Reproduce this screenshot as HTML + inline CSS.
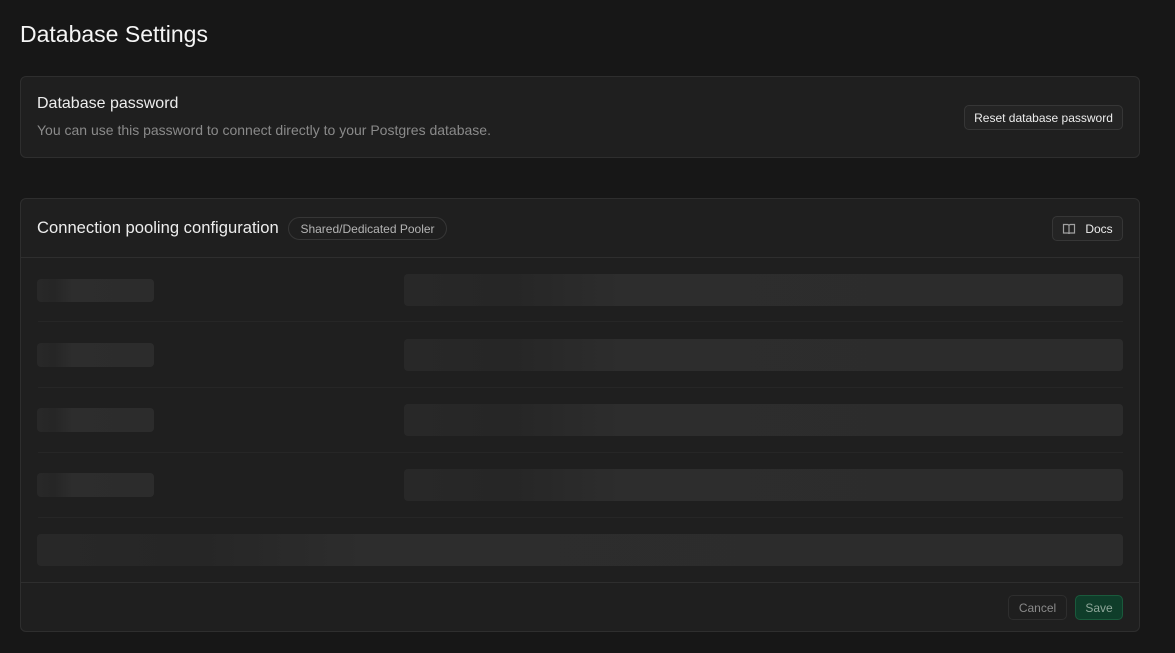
<!DOCTYPE html>
<html><head><style>
*{box-sizing:border-box;margin:0;padding:0}
body{width:1175px;height:653px;background:#171717;font-family:"Liberation Sans",sans-serif;color:#ededed;position:relative;overflow:hidden}
.a{position:absolute}
.card{position:absolute;left:20px;width:1120px;background:#1f1f1f;border:1px solid #2e2e2e;border-radius:6px}
.btn{position:absolute;border:1px solid #363636;background:#242424;border-radius:5px;font-size:12px;color:#ededed;display:flex;align-items:center;justify-content:center}
.sk{position:absolute;border-radius:4px;background:linear-gradient(90deg,#282828 0%,#262626 15%,#2d2d2d 30%,#2c2c2c 100%)}
.sep{position:absolute;left:17px;width:1085px;height:1px;background:#262626}
</style></head><body>
<div class="a" style="left:20px;top:21px;font-size:23px;color:#f5f5f5">Database Settings</div>
<div class="card" style="top:76px;height:82px">
  <div class="a" style="left:16px;top:18px;font-size:16px">Database password</div>
  <div class="a" style="left:16px;top:45px;font-size:14px;color:#8a8a8a">You can use this password to connect directly to your Postgres database.</div>
  <div class="btn" style="left:943px;top:28px;width:159px;height:25px">Reset database password</div>
</div>
<div class="card" style="top:198px;height:434px">
  <div class="a" style="left:16px;top:19px;font-size:16.6px">Connection pooling configuration</div>
  <div class="a" style="left:267px;top:18px;height:23px;width:159px;border:1px solid #363636;border-radius:12px;font-size:12px;color:#b4b4b4;display:flex;align-items:center;justify-content:center">Shared/Dedicated Pooler</div>
  <div class="btn" style="left:1031px;top:17px;width:71px;height:25px"><svg width="14" height="14" viewBox="0 0 14 14" style="margin-right:9px" fill="none" stroke="#a0a0a0" stroke-width="1.2"><path d="M1.5 2.5h4a1.5 1.5 0 0 1 1.5 1.5v8a1 1 0 0 0-1-1h-4.5zM12.5 2.5h-4A1.5 1.5 0 0 0 7 4v8a1 1 0 0 1 1-1h4.5z"/></svg>Docs</div>
  <div class="a" style="left:0;top:58px;width:1118px;height:1px;background:#2e2e2e"></div>
  <div class="sk" style="left:16px;top:80px;width:117px;height:23px"></div>
  <div class="sk" style="left:383px;top:75px;width:719px;height:32px"></div>
  <div class="sep" style="top:122px"></div>
  <div class="sk" style="left:16px;top:144px;width:117px;height:24px"></div>
  <div class="sk" style="left:383px;top:140px;width:719px;height:32px"></div>
  <div class="sep" style="top:188px"></div>
  <div class="sk" style="left:16px;top:209px;width:117px;height:24px"></div>
  <div class="sk" style="left:383px;top:205px;width:719px;height:32px"></div>
  <div class="sep" style="top:253px"></div>
  <div class="sk" style="left:16px;top:274px;width:117px;height:24px"></div>
  <div class="sk" style="left:383px;top:270px;width:719px;height:32px"></div>
  <div class="sep" style="top:318px"></div>
  <div class="sk" style="left:16px;top:335px;width:1086px;height:32px"></div>
  <div class="a" style="left:0;top:383px;width:1118px;height:1px;background:#2e2e2e"></div>
  <div class="btn" style="left:987px;top:396px;width:59px;height:25px;color:#8a8a8a;background:#1f1f1f;border-color:#2e2e2e">Cancel</div>
  <div class="btn" style="left:1054px;top:396px;width:48px;height:25px;color:#8fa79a;background:#0f3d2a;border-color:#1a5a3c">Save</div>
</div>
</body></html>
